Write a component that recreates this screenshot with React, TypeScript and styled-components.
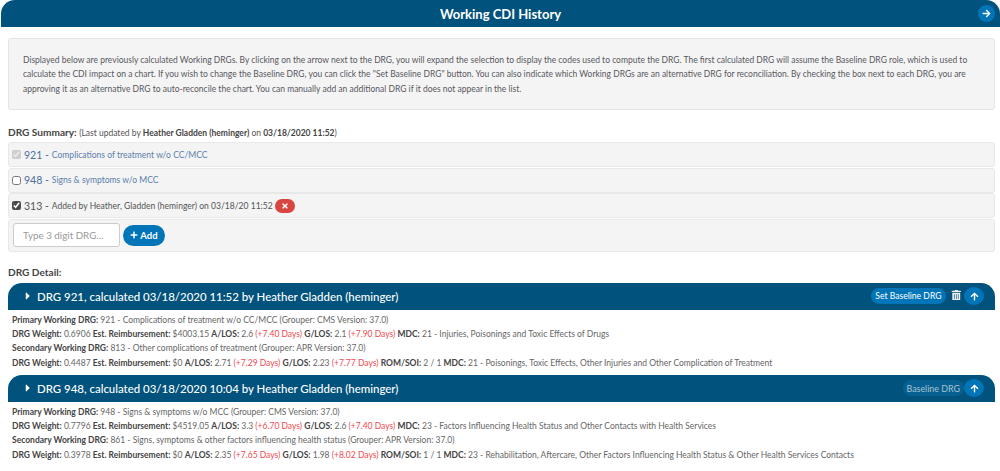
import React from 'react';
import styled, { createGlobalStyle } from 'styled-components';
import { FaArrowRight, FaArrowUp, FaPlus, FaTimes, FaTrashAlt, FaCaretRight } from 'react-icons/fa';

const GlobalStyle = createGlobalStyle`
  html, body {
    margin: 0;
    padding: 0;
    background: #fff;
    font-family: Lato, "Open Sans", sans-serif;
    color: #555;
    overflow: hidden;
  }
`;

const NAVY = '#01527c';
const BLUE = '#0275b8';

const Page = styled.div`
  width: 1000px;
  height: 471px;
  overflow: hidden;
`;

const TopBar = styled.div`
  height: 27px;
  margin-left: 1px;
  background: ${NAVY};
  border-radius: 14px 14px 0 0;
  color: #fff;
  font-size: 13px;
  font-weight: 700;
  display: flex;
  align-items: center;
  justify-content: center;
  position: relative;
`;

const RoundButton = styled.span`
  width: 20px;
  height: 18px;
  border-radius: 50%;
  background: ${BLUE};
  color: #fff;
  display: inline-flex;
  align-items: center;
  justify-content: center;
  font-size: 9px;
  flex: none;
`;

const TopAction = styled(RoundButton)`
  position: absolute;
  right: 5px;
  top: 5px;
  width: 17px;
  height: 17px;
`;

const Content = styled.div`
  padding: 11px 5px 0 8px;
`;

const IntroBox = styled.div`
  height: 72px;
  box-sizing: border-box;
  padding: 13.5px 14px 0 14px;
  background: #f4f4f4;
  border: 1px solid #e4e4e4;
  border-radius: 3px;
  font-size: 8.5px;
  line-height: 14.5px;
  color: #58585f;
`;

const SectionLabel = styled.div`
  font-size: 10.1px;
  line-height: 12px;
  font-weight: 700;
  color: #444;
`;

const SummaryLabel = styled(SectionLabel)`
  margin-top: 15.5px;
`;

const DetailLabel = styled(SectionLabel)`
  margin-top: 14px;
`;

const Muted = styled.span`
  font-weight: 400;
  font-size: 8.5px;
  color: #555;
  b { font-weight: 700; color: #444; }
`;

const SummaryList = styled.div`
  margin-top: 3.5px;
  display: flex;
  flex-direction: column;
  gap: 0.5px;
`;

const SummaryRow = styled.div<{ $tall?: boolean }>`
  height: ${(p) => (p.$tall ? '33px' : '25px')};
  box-sizing: border-box;
  background: #f4f4f4;
  border: 1px solid #e8e8e8;
  border-radius: 3px;
  display: flex;
  align-items: center;
  padding-left: 3px;
`;

const InputRow = styled(SummaryRow)`
  padding-left: 4px;
`;

const Check = styled.input`
  width: 9px;
  height: 9px;
  margin: 0 3px 0 0;
  accent-color: #4d4d4d;
  flex: none;
`;

const Code = styled.span<{ $link?: boolean }>`
  font-size: 10.5px;
  color: ${(p) => (p.$link ? '#4c6f9f' : '#555')};
  margin-right: 3px;
  white-space: pre;
`;

const RowText = styled.span<{ $link?: boolean }>`
  font-size: 8.55px;
  color: ${(p) => (p.$link ? '#5b80ad' : '#555')};
`;

const DangerButton = styled.span`
  width: 20px;
  height: 14px;
  margin-left: 2px;
  border-radius: 8px;
  background: #d9453f;
  color: #fff;
  display: inline-flex;
  align-items: center;
  justify-content: center;
  font-size: 8px;
`;

const DrgInput = styled.input`
  width: 107px;
  height: 24px;
  box-sizing: border-box;
  margin-right: 3px;
  padding: 0 9px;
  border: 1px solid #ccc;
  border-radius: 3px;
  background: #fff;
  font-family: inherit;
  font-size: 9.8px;
  &::placeholder { color: #999; }
`;

const AddButton = styled.span`
  width: 42px;
  height: 21px;
  border-radius: 11px;
  background: ${BLUE};
  color: #fff;
  font-size: 9.5px;
  font-weight: 700;
  display: inline-flex;
  align-items: center;
  justify-content: center;
  gap: 2px;
  svg { font-size: 8px; }
`;

const DetailList = styled.div`
  margin-top: 5px;
`;

const Panel = styled.section`
  & + & { margin-top: 1px; }
`;

const PanelHeader = styled.div`
  height: 27px;
  background: ${NAVY};
  border-radius: 14px 14px 0 0;
  color: #fff;
  display: flex;
  align-items: center;
  padding: 0 11px 0 14px;
`;

const Caret = styled.span`
  display: inline-flex;
  font-size: 12px;
  width: 15px;
`;

const PanelTitle = styled.span`
  font-size: 11.45px;
  font-weight: 500;
  flex: 1;
`;

const Pill = styled.span<{ $disabled?: boolean }>`
  height: 16px;
  padding: 0 4px;
  border-radius: 8px;
  background: ${(p) => (p.$disabled ? '#07608f' : BLUE)};
  color: ${(p) => (p.$disabled ? '#a8c3d4' : '#fff')};
  font-size: ${(p) => (p.$disabled ? '8.9px' : '8.6px')};
  display: inline-flex;
  align-items: center;
`;

const TrashIcon = styled.span`
  display: inline-flex;
  color: #f1f1f1;
  font-size: 10.5px;
  margin: 0 3px 2px 5px;
`;

const PanelBody = styled.div`
  padding: 3px 4px 4px 4px;
  font-size: 8.5px;
  line-height: 14.4px;
  color: #666;
  height: 64px;
  box-sizing: border-box;
`;

const Line = styled.div`
  white-space: nowrap;
  b { font-weight: 700; color: #444; }
`;

const Delta = styled.span`
  color: #f0494f;
`;

interface DetailStat {
  weight: string;
  reimbursement: string;
  alos: string;
  alosDelta: string;
  glos: string;
  glosDelta: string;
  romSoi?: string;
  mdc: string;
}

interface DrgEntry {
  title: string;
  baseline: boolean;
  primary: string;
  primaryStat: DetailStat;
  secondary: string;
  secondaryStat: DetailStat;
}

const drgs: DrgEntry[] = [
  {
    title: 'DRG 921, calculated 03/18/2020 11:52 by Heather Gladden (heminger)',
    baseline: false,
    primary: '921 - Complications of treatment w/o CC/MCC (Grouper: CMS Version: 37.0)',
    primaryStat: {
      weight: '0.6906', reimbursement: '$4003.15', alos: '2.6', alosDelta: '(+7.40 Days)',
      glos: '2.1', glosDelta: '(+7.90 Days)', mdc: '21 - Injuries, Poisonings and Toxic Effects of Drugs',
    },
    secondary: '813 - Other complications of treatment (Grouper: APR Version: 37.0)',
    secondaryStat: {
      weight: '0.4487', reimbursement: '$0', alos: '2.71', alosDelta: '(+7.29 Days)',
      glos: '2.23', glosDelta: '(+7.77 Days)', romSoi: '2 / 1',
      mdc: '21 - Poisonings, Toxic Effects, Other Injuries and Other Complication of Treatment',
    },
  },
  {
    title: 'DRG 948, calculated 03/18/2020 10:04 by Heather Gladden (heminger)',
    baseline: true,
    primary: '948 - Signs & symptoms w/o MCC (Grouper: CMS Version: 37.0)',
    primaryStat: {
      weight: '0.7796', reimbursement: '$4519.05', alos: '3.3', alosDelta: '(+6.70 Days)',
      glos: '2.6', glosDelta: '(+7.40 Days)',
      mdc: '23 - Factors Influencing Health Status and Other Contacts with Health Services',
    },
    secondary: '861 - Signs, symptoms & other factors influencing health status (Grouper: APR Version: 37.0)',
    secondaryStat: {
      weight: '0.3978', reimbursement: '$0', alos: '2.35', alosDelta: '(+7.65 Days)',
      glos: '1.98', glosDelta: '(+8.02 Days)', romSoi: '1 / 1',
      mdc: '23 - Rehabilitation, Aftercare, Other Factors Influencing Health Status & Other Health Services Contacts',
    },
  },
];

function StatLine({ stat }: { stat: DetailStat }) {
  return (
    <Line>
      <b>DRG Weight:</b> {stat.weight} <b>Est. Reimbursement:</b> {stat.reimbursement}{' '}
      <b>A/LOS:</b> {stat.alos} <Delta>{stat.alosDelta}</Delta> <b>G/LOS:</b> {stat.glos}{' '}
      <Delta>{stat.glosDelta}</Delta>{' '}
      {stat.romSoi && <><b>ROM/SOI:</b> {stat.romSoi} </>}
      <b>MDC:</b> {stat.mdc}
    </Line>
  );
}

export default function App() {
  return (
    <Page>
      <GlobalStyle />
      <TopBar>
        Working CDI History
        <TopAction><FaArrowRight /></TopAction>
      </TopBar>
      <Content>
        <IntroBox>
          Displayed below are previously calculated Working DRGs. By clicking on the arrow next to the DRG, you will expand the selection to display the codes used to compute the DRG. The first calculated DRG will assume the Baseline DRG role, which is used to calculate the CDI impact on a chart. If you wish to change the Baseline DRG, you can click the "Set Baseline DRG" button. You can also indicate which Working DRGs are an alternative DRG for reconciliation. By checking the box next to each DRG, you are approving it as an alternative DRG to auto-reconcile the chart. You can manually add an additional DRG if it does not appear in the list.
        </IntroBox>

        <SummaryLabel>
          DRG Summary: <Muted>(Last updated by <b>Heather Gladden (heminger)</b> on <b>03/18/2020 11:52</b>)</Muted>
        </SummaryLabel>
        <SummaryList>
          <SummaryRow>
            <Check type="checkbox" defaultChecked disabled />
            <Code $link>921 -</Code>
            <RowText $link>Complications of treatment w/o CC/MCC</RowText>
          </SummaryRow>
          <SummaryRow>
            <Check type="checkbox" />
            <Code $link>948 -</Code>
            <RowText $link>Signs &amp; symptoms w/o MCC</RowText>
          </SummaryRow>
          <SummaryRow>
            <Check type="checkbox" defaultChecked />
            <Code>313 -</Code>
            <RowText>Added by Heather, Gladden (heminger) on 03/18/20 11:52</RowText>
            <DangerButton><FaTimes /></DangerButton>
          </SummaryRow>
          <InputRow $tall>
            <DrgInput placeholder="Type 3 digit DRG..." />
            <AddButton><FaPlus />Add</AddButton>
          </InputRow>
        </SummaryList>

        <DetailLabel>DRG Detail:</DetailLabel>
        <DetailList>
          {drgs.map((drg) => (
            <Panel key={drg.title}>
              <PanelHeader>
                <Caret><FaCaretRight /></Caret>
                <PanelTitle>{drg.title}</PanelTitle>
                {drg.baseline ? (
                  <Pill $disabled>Baseline DRG</Pill>
                ) : (
                  <>
                    <Pill>Set Baseline DRG</Pill>
                    <TrashIcon><FaTrashAlt /></TrashIcon>
                  </>
                )}
                <RoundButton><FaArrowUp /></RoundButton>
              </PanelHeader>
              <PanelBody>
                <Line><b>Primary Working DRG:</b> {drg.primary}</Line>
                <StatLine stat={drg.primaryStat} />
                <Line><b>Secondary Working DRG:</b> {drg.secondary}</Line>
                <StatLine stat={drg.secondaryStat} />
              </PanelBody>
            </Panel>
          ))}
        </DetailList>
      </Content>
    </Page>
  );
}
